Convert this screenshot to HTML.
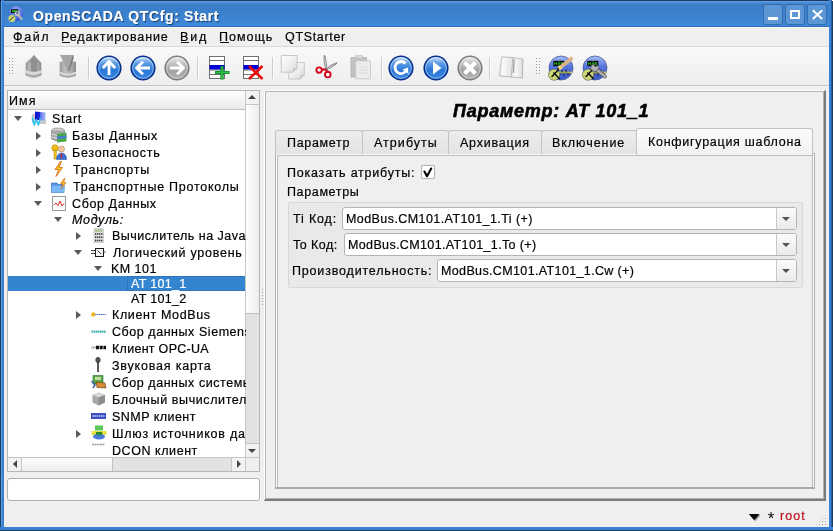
<!DOCTYPE html>
<html><head><meta charset="utf-8">
<style>
*{margin:0;padding:0;box-sizing:border-box}
html,body{width:833px;height:531px;overflow:hidden;background:#efefef}
body{position:relative;font-family:"Liberation Sans",sans-serif;font-size:12.5px;color:#000;-webkit-font-smoothing:antialiased;-webkit-text-stroke:0.2px currentColor}
.a{position:absolute}
.t{position:absolute;white-space:nowrap;line-height:15px;height:15px;will-change:transform}
.t u{text-decoration:none;border-bottom:1px solid #111;display:inline-block;line-height:12px}
svg{position:absolute;overflow:visible}
#title{left:0;top:0;width:833px;height:27px;background:linear-gradient(#1b3b62 0,#1b3b62 1px,#62a2ea 1px,#4e8ed6 2.5px,#3a7cc6 5px,#3e88d8 25.5px,#2f6fbc 26px,#2f6fbc 27px)}
#lb{left:0;top:0;width:4px;height:531px;background:linear-gradient(90deg,#1c3d62 0,#1c3d62 1px,#5c9ee8 1px,#5c9ee8 2px,#3a80d0 2px)}
#rb{left:829px;top:0;width:4px;height:531px;background:linear-gradient(90deg,#3a82d6 0,#3a82d6 2px,#2a5a98 2px,#2a5a98 3px,#1c3d62 3px)}
#bb{left:0;top:527px;width:833px;height:4px;background:linear-gradient(#3a80d0 0,#3a80d0 3px,#1c3d62 3px)}
.wbtn{position:absolute;top:4px;width:20px;height:21px;border-radius:3px;background:#5c96d4;border:1px solid #336cb0}
#toolbar{left:4px;top:46px;width:825px;height:41px;background:linear-gradient(#d8d8d8 0,#d8d8d8 1px,#f9f9f9 1px,#eeeeee 39px,#c2c2c2 39px,#c2c2c2 40px,#f6f6f6 40px)}
.sep{position:absolute;top:57px;width:2px;height:22px;background:linear-gradient(90deg,#cdcdcd 0,#cdcdcd 1px,#fbfbfb 1px)}
#tree{left:7px;top:90px;width:253px;height:382px;background:#fff;border:1px solid #b6b6b6}
#thead{left:8px;top:91px;width:237px;height:19px;background:linear-gradient(#fdfdfd,#ebebeb);border-bottom:1px solid #c2c2c2}
#vsb{left:245px;top:91px;width:14px;height:366px;background:#e2e2e2;border-left:1px solid #c6c6c6}
#vup{left:246px;top:91px;width:13px;height:14px;background:linear-gradient(90deg,#f4f4f4,#f0f0f0);border-bottom:1px solid #c6c6c6}
#vslider{left:246px;top:105px;width:13px;height:209px;background:linear-gradient(90deg,#ffffff,#ececec);border-bottom:1px solid #c2c2c2}
#vdown{left:246px;top:443px;width:13px;height:14px;background:linear-gradient(90deg,#f4f4f4,#f0f0f0);border-top:1px solid #c6c6c6}
#hsb{left:8px;top:457px;width:237px;height:14px;background:#e2e2e2;border-top:1px solid #c6c6c6}
#hleft{left:8px;top:458px;width:14px;height:13px;background:linear-gradient(#f4f4f4,#f0f0f0);border-right:1px solid #c6c6c6}
#hslider{left:22px;top:458px;width:91px;height:13px;background:linear-gradient(#ffffff,#ececec);border-right:1px solid #c2c2c2}
#hright{left:231px;top:458px;width:14px;height:13px;background:linear-gradient(#f4f4f4,#f0f0f0);border-left:1px solid #c6c6c6}
#corner{left:245px;top:457px;width:14px;height:14px;background:#efefef;border-left:1px solid #c6c6c6;border-top:1px solid #c6c6c6}
#sel{left:8px;top:276px;width:237px;height:15px;background:#3584d0}
#edit{left:7px;top:478px;width:253px;height:23px;background:#fff;border:1px solid #b0b0b0;border-radius:3px}
#rpane{left:264px;top:90px;width:562px;height:411px;border-top:1px solid #fbfbfb;border-left:1px solid #fbfbfb;border-right:2px solid #7c7c7c;border-bottom:2px solid #7c7c7c}
#rpane2{left:265px;top:91px;width:559px;height:408px;border-top:1px solid #b8b8b8;border-left:1px solid #b8b8b8;border-right:1px solid #b0b0b0;border-bottom:1px solid #b0b0b0}
.tab{position:absolute;top:130px;height:24px;background:linear-gradient(#ececec,#e3e3e3);border:1px solid #c3c3c3;border-bottom:none;border-radius:3px 3px 0 0}
#tabact{left:636px;top:128px;width:177px;height:27px;background:linear-gradient(#fbfbfb,#f1f1f1);border:1px solid #c3c3c3;border-bottom:none;border-radius:3px 3px 0 0}
#tframe{left:275px;top:153px;width:540px;height:336px;border:1px solid #b4b4b4;border-bottom:2px solid #aaaaaa}
#tinner{left:276px;top:154px;width:538px;height:333px;border:1px solid #fbfbfb;border-bottom:none}
#tin2{left:277px;top:155px;width:536px;height:332px;border:1px solid #bdbdbd;border-bottom:none;background:#efefef}
#grp{left:288px;top:202px;width:515px;height:86px;background:#e9e9e9;border:1px solid #d8d8d8;border-radius:2px}
.combo{position:absolute;height:23px;background:#fff;border:1px solid #b4b4b4;border-radius:3px}
.cbtn{position:absolute;right:0;top:0;width:20px;height:21px;border-left:1px solid #c8c8c8;background:linear-gradient(#fafafa,#ebebeb);border-radius:0 2px 2px 0}
.cbtn:after{content:"";position:absolute;left:5px;top:9px;border-left:4px solid transparent;border-right:4px solid transparent;border-top:4px solid #555}
#chk{left:421px;top:165px;width:14px;height:14px;background:#fff;border:1px solid #b0b0b0;border-radius:1px}
.ar{position:absolute;width:0;height:0;border-top:4px solid transparent;border-bottom:4px solid transparent;border-left:5px solid #5a5a5a}
.ad{position:absolute;width:0;height:0;border-left:4px solid transparent;border-right:4px solid transparent;border-top:5px solid #5a5a5a}
.au{position:absolute;width:0;height:0;border-left:4px solid transparent;border-right:4px solid transparent;border-bottom:4px solid #444}
.al{position:absolute;width:0;height:0;border-top:4px solid transparent;border-bottom:4px solid transparent;border-right:4px solid #444}
.dots{position:absolute;background-image:radial-gradient(circle,#9a9a9a 0.8px,transparent 1px)}
</style></head><body>
<div id="title" class="a"></div>
<div id="lb" class="a"></div>
<div id="rb" class="a"></div>
<div id="bb" class="a"></div>
<div class="a" style="left:0;top:0;width:1px;height:1px;background:#000"></div>
<div class="a" style="left:832px;top:0;width:1px;height:1px;background:#fff"></div>
<div class="a" style="left:4px;top:27px;width:825px;height:500px;background:#efefef"></div>
<div class="a" style="left:4px;top:27px;width:825px;height:1px;background:#f6f2ee"></div>

<!-- window buttons -->
<div class="wbtn" style="left:763px"><div class="a" style="left:4px;top:12px;width:10px;height:3px;background:#fff"></div></div>
<div class="wbtn" style="left:785px"><div class="a" style="left:4px;top:5px;width:10px;height:9px;border:2px solid #fff"></div></div>
<div class="wbtn" style="left:807px"><svg width="20" height="20" style="left:-1px;top:-1px"><path d="M5.8 6.2 L15.2 15 M15.2 6.2 L5.8 15" stroke="#fff" stroke-width="2"/></svg></div>
<!-- app icon -->
<svg width="16" height="17" style="left:8px;top:5px">
 <defs><radialGradient id="gapp" cx=".5" cy=".25" r=".8"><stop offset="0" stop-color="#8ea8f0"/><stop offset="1" stop-color="#2a4ed0"/></radialGradient></defs>
 <circle cx="8" cy="8.6" r="7.5" fill="url(#gapp)"/>
 <rect x="3" y="4.3" width="7" height="3.8" fill="#0a0a0a"/><rect x="4" y="5.3" width="5" height="1.8" fill="#2ab82a"/>
 <circle cx="3.9" cy="13.4" r="3.5" fill="#cad472"/>
 <path d="M1.8 15.6 L5.6 11.6" stroke="#222" stroke-width="1"/>
 <path d="M9.5 9 L14 14.5" stroke="#b4b4b4" stroke-width="2.4"/>
 <circle cx="9.3" cy="8.6" r="1.9" fill="none" stroke="#c4c4c4" stroke-width="1.3"/>
</svg>

<!-- menu bar -->
<div class="a" style="left:4px;top:46px;width:825px;height:1px;background:#d6d6d6"></div>

<!-- toolbar -->
<div id="toolbar" class="a"></div>
<div class="dots" style="left:8px;top:57px;width:6px;height:18px;background-size:3px 3px"></div>
<div class="dots" style="left:535px;top:57px;width:6px;height:18px;background-size:3px 3px"></div>
<div class="sep" style="left:88px"></div>
<div class="sep" style="left:197px"></div>
<div class="sep" style="left:272px"></div>
<div class="sep" style="left:381px"></div>
<div class="sep" style="left:489px"></div>
<!-- db up/down icons -->
<svg width="20" height="26" style="left:24px;top:54px">
 <defs><linearGradient id="gcyl" x1="0" x2="1"><stop offset="0" stop-color="#979797"/><stop offset=".3" stop-color="#bdbdbd"/><stop offset=".7" stop-color="#b0b0b0"/><stop offset="1" stop-color="#8a8a8a"/></linearGradient></defs>
 <path d="M1.7 9 L10 0.7 L17.3 9 L17.3 21.5 Q10 25.5 1.7 21.5 Z" fill="url(#gcyl)"/>
 <path d="M1.7 16 Q10 20 17.3 16 L17.3 19 Q10 23 1.7 19 Z" fill="#dadada"/>
 <path d="M1.7 19.5 Q10 23.5 17.3 19.5 L17.3 21.5 Q10 25.5 1.7 21.5 Z" fill="#a2a2a2"/>
 <path d="M2.5 21.6 Q10 25.3 16.5 21.6" stroke="#c8c8c8" stroke-width="1" fill="none"/>
 <path d="M10 1.5 L15.5 8.5 L13.2 8.5 L13.2 17 Q10 18 6.8 17 L6.8 8.5 L4.5 8.5 Z" fill="#8f8f8f"/>
</svg>
<svg width="20" height="26" style="left:58px;top:54px">
 <path d="M1.7 8 Q10 5.5 18 8 L18 21.5 Q10 25.5 1.7 21.5 Z" fill="url(#gcyl)"/>
 <path d="M1.7 17.5 Q10 21.5 18 17.5 L18 20 Q10 24 1.7 20 Z" fill="#d8d8d8"/>
 <path d="M1.7 20 Q10 24 18 20 L18 21.5 Q10 25.5 1.7 21.5 Z" fill="#a0a0a0"/>
 <path d="M2 1 L16 1 L10 17.5 Z" fill="#a6a6a6"/>
 <path d="M14.5 2 L10 17 L11.5 17 L16 3" fill="#7e7e7e"/>
</svg>
<!-- nav circles -->
<svg width="26" height="26" style="left:95.5px;top:54.5px">
 <defs>
  <linearGradient id="gblue" x1="0" y1="0" x2="0" y2="1"><stop offset="0" stop-color="#d6e8fb"/><stop offset=".3" stop-color="#5c9ce6"/><stop offset=".6" stop-color="#2a78d8"/><stop offset="1" stop-color="#3a88e0"/></linearGradient>
  <linearGradient id="ggray" x1="0" y1="0" x2="0" y2="1"><stop offset="0" stop-color="#f0f0f0"/><stop offset=".3" stop-color="#c4c4c4"/><stop offset=".6" stop-color="#a2a2a2"/><stop offset="1" stop-color="#b4b4b4"/></linearGradient>
 </defs>
 <circle cx="13" cy="13" r="11.8" fill="url(#gblue)" stroke="#06308a" stroke-width="1.5"/><circle cx="13" cy="13" r="10.3" fill="none" stroke="rgba(255,255,255,.45)" stroke-width=".9"/>
 <path d="M13 20 L13 7 M6.8 13 L13 6.5 L19.2 13" stroke="#fff" stroke-width="2.8" fill="none" stroke-linejoin="round"/>
</svg>
<svg width="26" height="26" style="left:129.5px;top:54.5px">
 <circle cx="13" cy="13" r="11.8" fill="url(#gblue)" stroke="#06308a" stroke-width="1.5"/><circle cx="13" cy="13" r="10.3" fill="none" stroke="rgba(255,255,255,.45)" stroke-width=".9"/>
 <path d="M20 13 L7 13 M13 6.8 L6.5 13 L13 19.2" stroke="#fff" stroke-width="2.8" fill="none" stroke-linejoin="round"/>
</svg>
<svg width="26" height="26" style="left:163.5px;top:54.5px">
 <circle cx="13" cy="13" r="11.8" fill="url(#ggray)" stroke="#7c7c7c" stroke-width="1.5"/><circle cx="13" cy="13" r="10.3" fill="none" stroke="rgba(255,255,255,.45)" stroke-width=".9"/>
 <path d="M6 13 L19 13 M13 6.8 L19.5 13 L13 19.2" stroke="#fff" stroke-width="2.8" fill="none" stroke-linejoin="round"/>
</svg>
<!-- add/del -->
<svg width="24" height="26" style="left:208px;top:55px">
 <rect x="1.5" y="1.5" width="15" height="22" fill="#fff" stroke="#707070" stroke-width="1"/>
 <path d="M1.5 5.5 H16.5 M1.5 19.5 H16.5 M1.5 15 H16.5" stroke="#707070" stroke-width="1"/>
 <rect x="1.5" y="10" width="15" height="4.5" fill="#0000d8"/>
 <path d="M7 17.5 H21.5 M14 11 V24.5" stroke="#0c8a2a" stroke-width="3.2"/>
 <path d="M7.5 17.5 H21 M14 11.5 V24" stroke="#2fbf4a" stroke-width="1.6"/>
</svg>
<svg width="24" height="26" style="left:242px;top:55px">
 <rect x="1.5" y="1.5" width="15" height="22" fill="#fff" stroke="#707070" stroke-width="1"/>
 <path d="M1.5 5.5 H16.5 M1.5 19.5 H16.5 M1.5 15 H16.5" stroke="#707070" stroke-width="1"/>
 <rect x="1.5" y="10" width="15" height="4.5" fill="#0000d8"/>
 <path d="M7 11 L20.5 24 M20.5 11 L7 24" stroke="#ee0a0a" stroke-width="2.6"/>
</svg>
<!-- copy/cut/paste -->
<svg width="26" height="26" style="left:279px;top:54px">
 <defs><linearGradient id="gsheet" x1="0" y1="0" x2="1" y2="1"><stop offset="0" stop-color="#ffffff"/><stop offset=".6" stop-color="#ececec"/><stop offset="1" stop-color="#d2d2d2"/></linearGradient></defs>
 <path d="M9.8 8.5 H25.3 V21 L21.3 25 H9.8 Z" fill="url(#gsheet)" stroke="#bcbcbc" stroke-width=".8"/>
 <path d="M21.3 25 V21 H25.3 Z" fill="#c8c8c8"/>
 <path d="M2.2 1.5 H18.2 V14 L14.2 18.2 H2.2 Z" fill="url(#gsheet)" stroke="#bcbcbc" stroke-width=".8"/>
 <path d="M14.2 18.2 V14 H18.2 Z" fill="#c8c8c8"/>
</svg>
<svg width="24" height="24" style="left:314px;top:54px">
 <path d="M10 1.7 Q9.6 9 11.6 15 L13 14.5 Q12.2 8 11 1.7 Z" fill="#d8d8d8" stroke="#6a6a6a" stroke-width=".7"/>
 <path d="M11.8 15.2 Q16 11 22.8 8.6 L22.3 10 Q17 13.5 12.6 16 Z" fill="#d8d8d8" stroke="#5a5a5a" stroke-width=".7"/>
 <path d="M12 15.5 L7.5 15.5 M12 15.5 L13.2 18" stroke="#c80010" stroke-width="1.8"/>
 <circle cx="5.1" cy="16.1" r="2.7" fill="#fff" stroke="#d0061a" stroke-width="1.9"/>
 <circle cx="13.8" cy="20.6" r="2.8" fill="#fff" stroke="#d0061a" stroke-width="1.9"/>
</svg>
<svg width="24" height="26" style="left:349px;top:54px">
 <path d="M2 3.5 H17.5 V23 H2 Z" fill="#c2c2c2" stroke="#b0b0b0" stroke-width=".8"/>
 <path d="M6.5 1.6 H13.5 V4.2 H6.5 Z" fill="#dcdcdc" stroke="#b8b8b8" stroke-width=".6"/>
 <path d="M6.8 6.8 H21.5 V24.8 H6.8 Z" fill="#ececec" stroke="#c4c4c4" stroke-width=".8"/>
 <path d="M9 9.5 H12 M9 13 H19 M9 16 H19 M9 19 H19" stroke="#dadada" stroke-width=".8"/>
</svg>
<!-- reload/play/stop -->
<svg width="26" height="26" style="left:388px;top:54.5px">
 <circle cx="13" cy="13" r="11.8" fill="url(#gblue)" stroke="#06308a" stroke-width="1.5"/><circle cx="13" cy="13" r="10.3" fill="none" stroke="rgba(255,255,255,.45)" stroke-width=".9"/>
 <path d="M17.5 8.5 A6 6 0 1 0 18.5 15" stroke="#fff" stroke-width="2.8" fill="none"/>
 <path d="M14.5 14.5 L20 12.5 L20.5 19 Z" fill="#fff"/>
</svg>
<svg width="26" height="26" style="left:422.5px;top:54.5px">
 <circle cx="13" cy="13" r="11.8" fill="url(#gblue)" stroke="#06308a" stroke-width="1.5"/><circle cx="13" cy="13" r="10.3" fill="none" stroke="rgba(255,255,255,.45)" stroke-width=".9"/>
 <path d="M10 6.5 L18.5 13 L10 19.5 Z" fill="#fff"/>
</svg>
<svg width="26" height="26" style="left:456.5px;top:54.5px">
 <circle cx="13" cy="13" r="11.8" fill="url(#ggray)" stroke="#7c7c7c" stroke-width="1.5"/><circle cx="13" cy="13" r="10.3" fill="none" stroke="rgba(255,255,255,.45)" stroke-width=".9"/>
 <path d="M7.6 7.6 L18.4 18.4 M18.4 7.6 L7.6 18.4" stroke="#fff" stroke-width="4.2"/>
</svg>
<!-- book -->
<svg width="28" height="26" style="left:497.5px;top:55px">
 <defs><linearGradient id="gpage" x1="0" x2="1"><stop offset="0" stop-color="#e8e8e8"/><stop offset=".25" stop-color="#fafafa"/><stop offset="1" stop-color="#dedede"/></linearGradient></defs>
 <path d="M4.3 2 L25.3 4.2 L25 23.5 L1.5 21.2 Z" fill="#c8c8c8"/>
 <path d="M3.8 1.8 L15.1 2.6 L13.5 22 L1.3 20.7 Z" fill="url(#gpage)" stroke="#b4b4b4" stroke-width=".8"/>
 <path d="M15.1 2.6 L24.8 3.9 L24.4 22.8 L13.5 22 Z" fill="url(#gpage)" stroke="#b4b4b4" stroke-width=".8"/>
 <path d="M16.2 4 L15.6 18" stroke="#8a8a8a" stroke-width="1"/>
</svg>
<!-- station icons -->
<svg width="26" height="26" style="left:547.5px;top:54.5px">
 <defs><linearGradient id="gsph" x1="0" y1="0" x2="0" y2="1"><stop offset="0" stop-color="#a8bcf4"/><stop offset=".45" stop-color="#5474dc"/><stop offset="1" stop-color="#3a5cd0"/></linearGradient></defs>
 <circle cx="13" cy="13" r="12" fill="url(#gsph)" stroke="#4a5a98" stroke-width=".8"/>
 <rect x="5.3" y="5.8" width="11" height="5.4" fill="#0c0c0c"/>
 <path d="M6.5 7 V10 M8.5 7 V10 M6.5 8.5 H8.5 M10 7 H12 V8.5 H10 V10 H12 M13.5 7 V10 M14.5 7 V10" stroke="#1fb01f" stroke-width=".8"/>
 <path d="M9.5 17.4 H24" stroke="#d8dc48" stroke-width="1.8"/>
 <path d="M12 20.5 L14 15 L16 21.5 L18 14.5 L20 20.5 L22 16" stroke="#1a1a3a" stroke-width=".6" fill="none"/>
 <circle cx="6.1" cy="19.7" r="5.6" fill="#cdd978" stroke="#5a5a40" stroke-width=".6"/>
 <path d="M3.6 22 L10.6 14.6 M5.4 17.4 L11.8 24" stroke="#111" stroke-width="1.5"/>
 <path d="M23.2 3.8 L11.5 13" stroke="#dcb48a" stroke-width="3.8" stroke-linecap="round"/>
 <path d="M13 11.8 L11 13.5" stroke="#e6de78" stroke-width="3.8"/>
 <path d="M10.8 13.6 L9.6 14.6" stroke="#222" stroke-width="2"/>
</svg>
<svg width="26" height="26" style="left:581.5px;top:54.5px">
 <circle cx="13" cy="13" r="12" fill="url(#gsph)" stroke="#4a5a98" stroke-width=".8"/>
 <rect x="5.3" y="5.8" width="11" height="5.4" fill="#0c0c0c"/>
 <path d="M6.5 7 V10 M8.5 7 V10 M6.5 8.5 H8.5 M10 7 H12 V8.5 H10 V10 H12 M13.5 7 V10 M14.5 7 V10" stroke="#1fb01f" stroke-width=".8"/>
 <path d="M9.5 17.4 H24" stroke="#d8dc48" stroke-width="1.8"/>
 <path d="M12 20.5 L14 15 L16 21.5 L18 14.5 L20 20.5 L22 16" stroke="#1a1a3a" stroke-width=".6" fill="none"/>
 <circle cx="6.1" cy="19.7" r="5.6" fill="#cdd978" stroke="#5a5a40" stroke-width=".6"/>
 <path d="M3.6 22 L10.6 14.6 M5.4 17.4 L11.8 24" stroke="#111" stroke-width="1.5"/>
 <path d="M14 14 L23 21.5" stroke="#555" stroke-width="3.6" stroke-linecap="round"/>
 <path d="M14 14 L23 21.5" stroke="#b0b0b0" stroke-width="2.4" stroke-linecap="round"/>
 <path d="M9.5 10.5 A3.8 3.8 0 1 0 15.5 10 L13.8 12 L12 10.5 L13.5 8.3 Z" fill="#b4b4b4" stroke="#555" stroke-width=".6"/>
</svg>

<!-- tree -->
<div id="tree" class="a"></div>
<div id="thead" class="a"></div>
<div id="vsb" class="a"></div>
<div id="vup" class="a"><div class="au" style="left:2px;top:4px"></div></div>
<div id="vslider" class="a"></div>
<div id="vdown" class="a"><div class="ad" style="left:2px;top:5px;border-top-width:4px;border-top-color:#444"></div></div>
<div id="hsb" class="a"></div>
<div id="hleft" class="a"><div class="al" style="left:5px;top:2px"></div></div>
<div id="hslider" class="a"></div>
<div id="hright" class="a"><div class="ar" style="left:5px;top:2px;border-left-width:4px;border-left-color:#444"></div></div>
<div id="corner" class="a"></div>
<div id="sel" class="a"></div>
<div class="a" style="left:127px;top:276px;width:118px;height:15px;border:1px solid #2f74bc;border-right:none"></div>
<!-- tree arrows -->
<div class="ad" style="left:14px;top:116px"></div>
<div class="ar" style="left:36px;top:132px"></div>
<div class="ar" style="left:36px;top:149px"></div>
<div class="ar" style="left:36px;top:166px"></div>
<div class="ar" style="left:36px;top:183px"></div>
<div class="ad" style="left:34px;top:201px"></div>
<div class="ad" style="left:54px;top:217px"></div>
<div class="ar" style="left:76px;top:232px"></div>
<div class="ad" style="left:74px;top:250px"></div>
<div class="ad" style="left:94px;top:266px"></div>
<div class="ar" style="left:76px;top:311px"></div>
<div class="ar" style="left:76px;top:430px"></div>
<!-- tree icons -->
<svg width="16" height="16" style="left:31px;top:110px">
 <defs><linearGradient id="gscr" x1="0" x2="1"><stop offset="0" stop-color="#0a10c8"/><stop offset=".45" stop-color="#1a28e0"/><stop offset=".55" stop-color="#7080f0"/><stop offset="1" stop-color="#a8b4f4"/></linearGradient></defs>
 <path d="M1 4 L4 4 L4 13 L1 13 Z M10 10 L15 10 L15 14 L8 14 Z" fill="#c8c8c8"/>
 <path d="M4 1.5 L14.5 2.5 L14.5 10.5 L4 10 Z" fill="url(#gscr)"/>
 <path d="M1.2 7.5 L3.3 15 L5.3 9.5 L7.3 15 L9.6 7.5" stroke="#34c4f0" stroke-width="1.6" fill="none" stroke-linejoin="round"/>
</svg>
<svg width="16" height="16" style="left:51px;top:127px">
 <ellipse cx="7" cy="3.5" rx="6.5" ry="2.5" fill="#d0d0d0" stroke="#777" stroke-width=".6"/>
 <path d="M0.5 3.5 V12 Q7 16 13.5 12 V3.5" fill="#a8a8a8" stroke="#777" stroke-width=".6"/>
 <path d="M0.5 7 Q7 10 13.5 7 M0.5 10 Q7 13 13.5 10" stroke="#e0e0e0" fill="none"/>
 <path d="M6 7 L15.5 5.5 V14.5 L6 15.5 Z" fill="#4aa84a"/>
 <path d="M6 9.5 L15.5 8.5 V11 L6 12 Z" fill="#4a7ad8"/>
</svg>
<svg width="16" height="16" style="left:51px;top:144px">
 <circle cx="4" cy="4" r="3.2" fill="#f0c020" stroke="#b07a00" stroke-width=".6"/>
 <rect x="3" y="6" width="2.2" height="9" fill="#f0c020" stroke="#b07a00" stroke-width=".5"/>
 <circle cx="10.5" cy="5" r="3" fill="#f4c8a0" stroke="#9a6a40" stroke-width=".5"/>
 <path d="M5.5 15.5 Q6 9 10.5 9 Q15.5 9 15.5 15.5 Z" fill="#3a70d8" stroke="#224a90" stroke-width=".5"/>
 <path d="M10.5 9.5 V14" stroke="#d82020" stroke-width="1.4"/>
</svg>
<svg width="16" height="16" style="left:51px;top:161px">
 <path d="M9.5 0.5 L4 8.5 L7.5 8.5 L5 15.5 L11.5 6.5 L8 6.5 L10.5 0.5 Z" fill="#f8c828" stroke="#d05a10" stroke-width=".8"/>
</svg>
<svg width="16" height="16" style="left:51px;top:178px">
 <path d="M0.5 5 H6 L7.5 6.5 H13 V14.5 H0.5 Z" fill="#5a9ae8" stroke="#2a62b0" stroke-width=".6"/>
 <path d="M1 8 H14 L13 14.5 H0.5 Z" fill="#7ab8f8"/>
 <path d="M13 0.5 L9.5 6 L12 6 L10 11 L15 4.5 L12.5 4.5 L14 0.5 Z" fill="#f8c828" stroke="#d05a10" stroke-width=".6"/>
</svg>
<svg width="16" height="16" style="left:51px;top:195px">
 <rect x="1.5" y="1.5" width="13" height="14" fill="#fafafa" stroke="#9a9a9a"/>
 <path d="M3 10 L5 8 L7 10.5 L9 6 L11 11 L13 8.5" stroke="#d83030" stroke-width="1" fill="none"/>
</svg>
<svg width="12" height="16" style="left:93px;top:228px">
 <rect x="1" y="0.7" width="9.3" height="14" fill="#dedede" stroke="#b8b8b8" stroke-width=".6"/>
 <rect x="1.8" y="1.5" width="7.6" height="2.2" fill="#a4c48c"/>
 <path d="M2 6 H9.5 M2 9.2 H9.5 M2 12.4 H9.5" stroke="#2a2a2a" stroke-width="1.5" stroke-dasharray="1.3 .75"/>
</svg>
<svg width="16" height="10" style="left:90px;top:247px">
 <rect x="5.5" y="1.5" width="8" height="8" fill="#f4f4f4" stroke="#1a1a1a" stroke-width="1"/>
 <path d="M1 3.6 H5.5 M1 6.6 H5.5 M13.5 5 H15.5 M7.5 3.5 L11 7" stroke="#333" stroke-width="1"/>
</svg>
<svg width="16" height="6" style="left:91px;top:311px">
 <circle cx="2.3" cy="3.4" r="2.2" fill="#f2b428"/>
 <path d="M4 3.5 H15" stroke="#4a6ad0" stroke-width="1.2" stroke-dasharray="1.4 .5"/>
</svg>
<svg width="16" height="5" style="left:91px;top:329px"><path d="M0.5 2.6 H15" stroke="#48b4b0" stroke-width="2.2" stroke-dasharray="1.6 .4"/></svg>
<svg width="16" height="6" style="left:91px;top:345px"><path d="M0.5 2.5 H5" stroke="#888" stroke-width="2" stroke-dasharray="1 .6"/><path d="M5 2.5 H15" stroke="#111" stroke-width="3.6" stroke-dasharray="3 .7"/></svg>
<svg width="8" height="16" style="left:94px;top:357px">
 <ellipse cx="4" cy="3" rx="2.6" ry="3" fill="#505050"/>
 <path d="M4 5 V15" stroke="#303030" stroke-width="1.6"/>
</svg>
<svg width="16" height="14" style="left:91px;top:375px">
 <path d="M2 0.5 H12 V9 H2 Z" fill="#5aa84a" stroke="#2a6a2a" stroke-width=".6"/>
 <rect x="4" y="2" width="6" height="3" fill="#c0e0a0"/>
 <path d="M5 7 L14 8 L15 13 L6 12.5 Z" fill="#d88a30" stroke="#5a3010" stroke-width=".6"/>
 <path d="M0.5 6 L4 10 L2 13" stroke="#3a5aa8" stroke-width="1.4" fill="none"/>
</svg>
<svg width="14" height="14" style="left:92px;top:392px">
 <path d="M6.5 0.5 L13 3 L13 10.5 L6.5 13.5 L0.5 10.5 L0.5 3 Z" fill="#a8a8a8"/>
 <path d="M0.5 3 L6.5 5.5 L13 3 L6.5 0.5 Z" fill="#d8d8d8"/>
 <path d="M6.5 5.5 V13.5 L13 10.5 V3 Z" fill="#8c8c8c"/>
</svg>
<svg width="16" height="7" style="left:91px;top:413px"><rect x="0" y="0" width="15" height="6" fill="#3a4ec0"/><path d="M1.5 3 H13.5" stroke="#c8d0f8" stroke-width="1.4" stroke-dasharray="1.5 .6"/></svg>
<svg width="16" height="15" style="left:91px;top:425px">
 <rect x="4" y="0.5" width="8" height="5" fill="#5ac85a"/>
 <path d="M0.5 6 H15.5 V10 H0.5 Z" fill="#e8e040"/>
 <ellipse cx="8" cy="11.5" rx="6" ry="3" fill="#4a7ad8"/>
 <rect x="5" y="7" width="6" height="3" fill="#2a8a2a"/>
</svg>
<svg width="16" height="5" style="left:91px;top:442px"><path d="M1 2.5 H14" stroke="#9a9a9a" stroke-width="1.6" stroke-dasharray="2 .6"/></svg>

<!-- left bottom edit -->
<div id="edit" class="a"></div>
<!-- splitter -->
<div class="dots" style="left:261px;top:288px;width:3px;height:18px;background-size:3px 3px"></div>

<!-- right pane -->
<div id="rpane" class="a"></div>
<div id="rpane2" class="a"></div>
<div id="tframe" class="a"></div>
<div id="tinner" class="a"></div>
<div id="tin2" class="a"></div>
<div class="tab" style="left:275px;width:88px"></div>
<div class="tab" style="left:362px;width:87px"></div>
<div class="tab" style="left:448px;width:94px"></div>
<div class="tab" style="left:541px;width:97px"></div>
<div id="tabact" class="a"></div>
<div id="chk" class="a"><svg width="14" height="14" style="left:-1px;top:-1px"><path d="M3.4 6.5 L6 11.2 L10.2 3.5" stroke="#000" stroke-width="2.1" fill="none" stroke-linecap="round" stroke-linejoin="round"/></svg></div>
<div id="grp" class="a"></div>
<div class="combo" style="left:342px;top:207px;width:455px"><div class="cbtn"></div></div>
<div class="combo" style="left:344px;top:233px;width:453px"><div class="cbtn"></div></div>
<div class="combo" style="left:437px;top:259px;width:360px"><div class="cbtn"></div></div>

<!-- status bar -->
<svg width="13" height="9" style="left:748px;top:513px"><path d="M2 2 L12.5 2 L7.5 8.2 Z" fill="#9a9a9a"/><path d="M0.8 1 L11.5 1 L6.2 7.2 Z" fill="#0a0a0a"/></svg>
<svg width="8" height="8" style="left:767px;top:511px"><path d="M4 1 V4.2 M4 4.2 L1 3.2 M4 4.2 L7 3.2 M4 4.2 L2.2 7 M4 4.2 L5.8 7" stroke="#222" stroke-width="1.1"/></svg>
<div class="dots" style="left:815px;top:514px;width:12px;height:12px;background-size:3px 3px;clip-path:polygon(100% 0,100% 100%,0 100%)"></div>
<!--TEXT-->
<div class="t" style="left:32.5px;top:7px;letter-spacing:0.63px;font-size:14px;line-height:18px;height:18px;font-weight:bold;color:#fff;text-shadow:1px 1px 1px rgba(10,40,80,.8);">OpenSCADA QTCfg: Start</div>
<div class="t" style="left:12.5px;top:30px;letter-spacing:1.63px;">Файл</div>
<div class="t" style="left:60.5px;top:30px;letter-spacing:0.89px;">Редактирование</div>
<div class="t" style="left:180.2px;top:30px;letter-spacing:1.9px;">Вид</div>
<div class="t" style="left:219.1px;top:30px;letter-spacing:1.0px;">Помощь</div>
<div class="t" style="left:284.7px;top:30px;letter-spacing:0.67px;">QTStarter</div>
<div class="t" style="left:9.1px;top:94px;letter-spacing:1.05px;">Имя</div>
<div class="t" style="left:52.4px;top:112px;letter-spacing:0.72px;max-width:193px;overflow:hidden;">Start</div>
<div class="t" style="left:71.7px;top:129px;letter-spacing:0.75px;max-width:174px;overflow:hidden;">Базы Данных</div>
<div class="t" style="left:71.7px;top:146px;letter-spacing:0.719px;max-width:174px;overflow:hidden;">Безопасность</div>
<div class="t" style="left:72.7px;top:163px;letter-spacing:0.799px;max-width:173px;overflow:hidden;">Транспорты</div>
<div class="t" style="left:72.7px;top:180px;letter-spacing:0.742px;max-width:173px;overflow:hidden;">Транспортные Протоколы</div>
<div class="t" style="left:71.7px;top:197px;letter-spacing:0.6px;max-width:174px;overflow:hidden;">Сбор Данных</div>
<div class="t" style="left:71.5px;top:213px;letter-spacing:0.663px;font-style:italic;max-width:174px;overflow:hidden;">Модуль:</div>
<div class="t" style="left:112.0px;top:229px;letter-spacing:0.5px;max-width:134px;overflow:hidden;">Вычислитель на Java-</div>
<div class="t" style="left:113.0px;top:246px;letter-spacing:0.741px;max-width:133px;overflow:hidden;">Логический уровень</div>
<div class="t" style="left:110.9px;top:262px;letter-spacing:0.46px;max-width:135px;overflow:hidden;">KM 101</div>
<div class="t" style="left:131.0px;top:277px;letter-spacing:0.3px;color:#fff;max-width:114px;overflow:hidden;">AT 101_1</div>
<div class="t" style="left:131.0px;top:292px;letter-spacing:0.3px;max-width:114px;overflow:hidden;">AT 101_2</div>
<div class="t" style="left:112.0px;top:308px;letter-spacing:0.637px;max-width:134px;overflow:hidden;">Клиент ModBus</div>
<div class="t" style="left:112.0px;top:325px;letter-spacing:0.55px;max-width:134px;overflow:hidden;">Сбор данных Siemens</div>
<div class="t" style="left:112.0px;top:342px;letter-spacing:0.287px;max-width:134px;overflow:hidden;">Клиент OPC-UA</div>
<div class="t" style="left:112.0px;top:359px;letter-spacing:0.803px;max-width:134px;overflow:hidden;">Звуковая карта</div>
<div class="t" style="left:112.0px;top:376px;letter-spacing:0.55px;max-width:134px;overflow:hidden;">Сбор данных системы</div>
<div class="t" style="left:112.0px;top:393px;letter-spacing:0.6px;max-width:134px;overflow:hidden;">Блочный вычислитель</div>
<div class="t" style="left:112.0px;top:410px;letter-spacing:0.46px;max-width:134px;overflow:hidden;">SNMP клиент</div>
<div class="t" style="left:112.0px;top:427px;letter-spacing:0.75px;max-width:134px;overflow:hidden;">Шлюз источников данных</div>
<div class="t" style="left:112.0px;top:444px;letter-spacing:0.56px;max-width:134px;overflow:hidden;">DCON клиент</div>
<div class="t" style="left:453.4px;top:100px;letter-spacing:0.74px;font-size:18px;line-height:22px;height:22px;font-weight:bold;font-style:italic;color:#000;-webkit-text-stroke:0.6px #000;">Параметр: AT 101_1</div>
<div class="t" style="left:286.5px;top:136px;letter-spacing:0.68px;">Параметр</div>
<div class="t" style="left:373.9px;top:136px;letter-spacing:1.04px;">Атрибуты</div>
<div class="t" style="left:460.3px;top:136px;letter-spacing:0.77px;">Архивация</div>
<div class="t" style="left:551.7px;top:136px;letter-spacing:0.96px;">Включение</div>
<div class="t" style="left:648.0px;top:135px;letter-spacing:0.727px;">Конфигурация шаблона</div>
<div class="t" style="left:287.4px;top:166px;letter-spacing:0.781px;">Показать атрибуты:</div>
<div class="t" style="left:287.4px;top:185px;letter-spacing:0.635px;">Параметры</div>
<div class="t" style="left:292.7px;top:212px;letter-spacing:0.83px;">Ti Код:</div>
<div class="t" style="left:292.7px;top:238px;letter-spacing:0.45px;">To Код:</div>
<div class="t" style="left:291.7px;top:264px;letter-spacing:0.82px;">Производительность:</div>
<div class="t" style="left:345.5px;top:212px;letter-spacing:0.42px;">ModBus.CM101.AT101_1.Ti (+)</div>
<div class="t" style="left:348.2px;top:238px;letter-spacing:0.362px;">ModBus.CM101.AT101_1.To (+)</div>
<div class="t" style="left:441.3px;top:264px;letter-spacing:0.362px;">ModBus.CM101.AT101_1.Cw (+)</div>
<div class="t" style="left:779.7px;top:509px;letter-spacing:1.05px;color:#c0101a;max-width:-533px;overflow:hidden;">root</div>
<div class="a" style="left:14px;top:42px;width:11px;height:1px;background:#111"></div>
<div class="a" style="left:62px;top:42px;width:8px;height:1px;background:#111"></div>
<div class="a" style="left:181px;top:42px;width:8px;height:1px;background:#111"></div>
<div class="a" style="left:220px;top:42px;width:9px;height:1px;background:#111"></div>
<!--/TEXT-->
</body></html>
